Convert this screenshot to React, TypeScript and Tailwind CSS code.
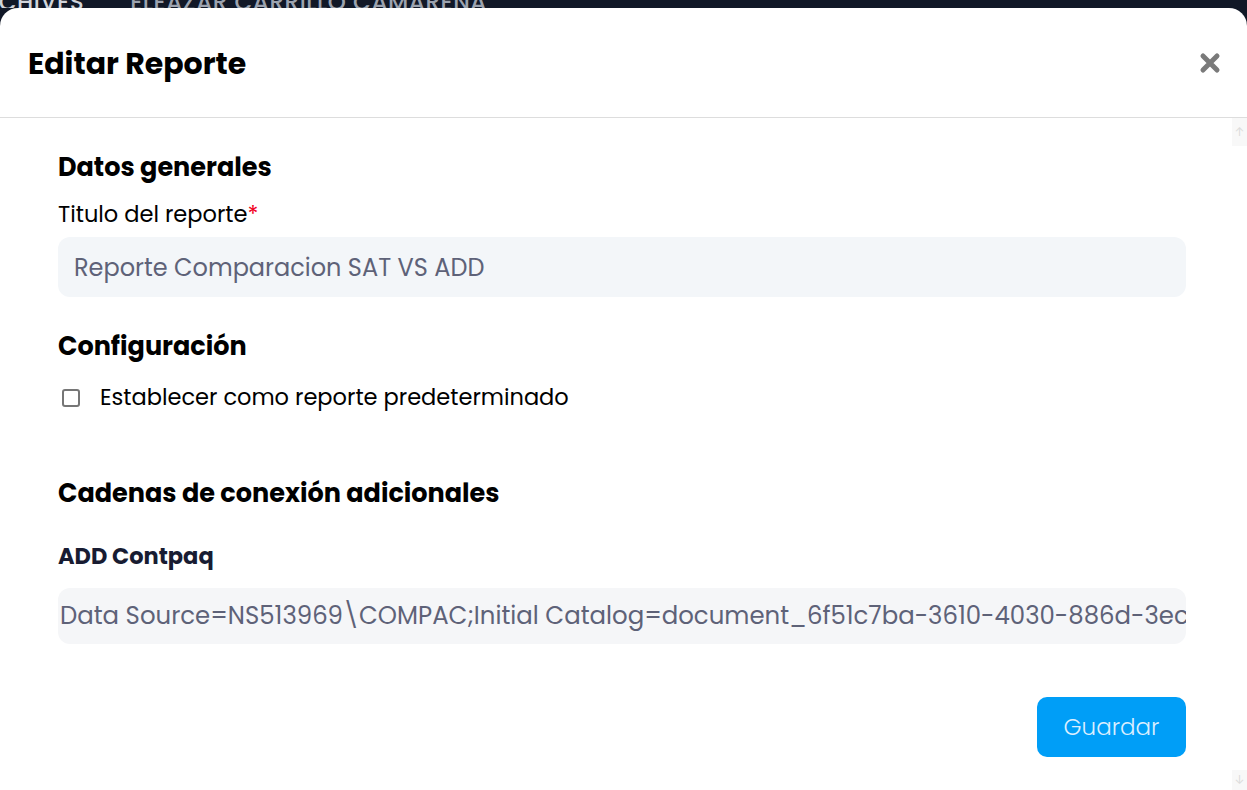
import { useState } from "react";

const font = { fontFamily: "Poppins, Inter, 'Noto Sans', sans-serif" };

function ScrollTrack() {
  return (
    <div className="flex w-[15px] flex-col justify-between">
      <div className="flex h-[28px] items-center justify-center bg-[#f8f8f8] text-[12px] leading-none text-[#dcdcdc]">
        ↑
      </div>
      <div className="flex h-[20px] items-center justify-center bg-[#f8f8f8] text-[12px] leading-none text-[#dcdcdc]">
        ↓
      </div>
    </div>
  );
}

export default function App() {
  const [isDefault, setIsDefault] = useState(false);
  const [title, setTitle] = useState("Reporte Comparacion SAT VS ADD");
  const conn =
    "Data Source=NS513969\\COMPAC;Initial Catalog=document_6f51c7ba-3610-4030-886d-3ec4a2b1f9d0_metadata;User Id=sa;Password=********";

  return (
    <div className="flex h-[790px] flex-col overflow-hidden bg-[#111827]" style={font}>
      {/* page behind the modal */}
      <div className="flex h-2 items-end gap-[46px] overflow-hidden whitespace-nowrap">
        <span className="-ml-[33px] -mb-[6px] text-[23px] font-medium uppercase leading-none tracking-wide text-[#d1d5db]">
          Archives
        </span>
        <span className="-mb-[6px] text-[23px] font-medium uppercase leading-none tracking-wide text-[#9ca3af]">
          Eleazar Carrillo Camarena
        </span>
      </div>

      {/* modal */}
      <div className="flex min-h-0 flex-1 flex-col rounded-t-[18px] bg-white">
        <div className="flex h-[110px] shrink-0 items-center justify-between border-b border-[#dddddd] pl-[28px] pr-[26px]">
          <h2 className="mt-[2px] text-[30px] font-bold text-black">Editar Reporte</h2>
          <button type="button" className="text-[#7a7a7a]">
            <svg width="22" height="22" viewBox="0 0 22 22">
              <path d="M4 4 L18 18 M18 4 L4 18" stroke="currentColor" strokeWidth="5" strokeLinecap="round" />
            </svg>
          </button>
        </div>

        <div className="flex min-h-0 flex-1">
          <div className="flex min-w-0 flex-1 flex-col pl-[58px] pr-[46px] pt-[33px]">
            <h3 className="text-[25.5px] font-bold leading-8 text-black">Datos generales</h3>
            <label className="mt-[17px] text-[22.5px] leading-7 text-black">
              Titulo del reporte<span className="text-[#f1001b]">*</span>
            </label>
            <input
              value={title}
              onChange={(e) => setTitle(e.target.value)}
              className="mt-[9px] h-[60px] w-full rounded-xl bg-[#f3f6f9] px-4 text-[24px] text-[#5e6278] outline-none"
              style={font}
            />

            <h3 className="mt-[33px] text-[25.5px] font-bold leading-8 text-black">Configuración</h3>
            <label className="mt-[22px] flex h-7 items-center gap-[20px] text-[22.5px] text-black">
              <input
                type="checkbox"
                checked={isDefault}
                onChange={(e) => setIsDefault(e.target.checked)}
                className="ml-1 h-[18px] w-[18px] shrink-0 appearance-none rounded-[3px] border-2 border-[#767676]"
              />
              Establecer como reporte predeterminado
            </label>

            <h3 className="mt-[65px] text-[25.5px] font-bold leading-8 text-black">
              Cadenas de conexión adicionales
            </h3>
            <label className="mt-[33px] text-[22.5px] font-bold leading-7 text-[#181c32]">ADD Contpaq</label>
            <div className="mt-[18px] flex h-[56px] items-center overflow-hidden whitespace-nowrap rounded-xl bg-[#f5f6f8] pl-[2px] text-[24.4px] text-[#5e6278]">
              {conn}
            </div>

            <div className="mt-[53px] flex justify-end">
              <button
                type="button"
                className="h-[60px] w-[149px] rounded-[10px] bg-[#009ef7] text-[23px] font-light text-[#dbeeff]"
              >
                Guardar
              </button>
            </div>
          </div>
          <ScrollTrack />
        </div>
      </div>
    </div>
  );
}
